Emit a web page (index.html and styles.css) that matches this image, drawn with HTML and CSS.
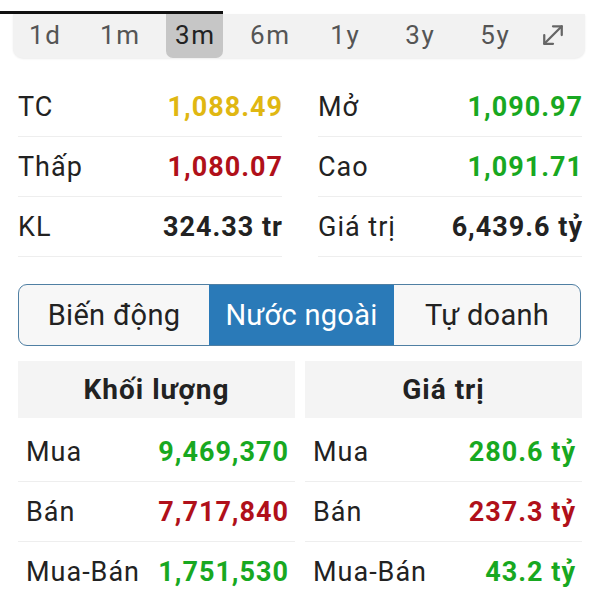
FILE: index.html
```html
<!DOCTYPE html>
<html lang="vi">

<head>
  <meta charset="UTF-8" />
  <meta name="viewport" content="width=device-width, initial-scale=1" />
  <title>Chỉ số thị trường</title>
  <link rel="stylesheet" href="styles.css">
</head>

<body>
  <div class="topline"></div>

  <nav class="periods">
    <span class="period">1d</span>
    <span class="period">1m</span>
    <span class="period active">3m</span>
    <span class="period">6m</span>
    <span class="period">1y</span>
    <span class="period">3y</span>
    <span class="period">5y</span>
    <span class="period expand">
      <svg width="30" height="30" viewBox="0 0 24 24" fill="none" stroke="#666" stroke-width="1.8" stroke-linecap="round" stroke-linejoin="round">
        <line x1="5" y1="19" x2="19" y2="5" />
        <polyline points="12,5 19,5 19,12" />
        <polyline points="5,12 5,19 12,19" />
      </svg>
    </span>
  </nav>

  <section class="stats">
    <div class="stat"><span>TC</span><b class="ref">1,088.49</b></div>
    <div class="stat"><span>Mở</span><b class="up">1,090.97</b></div>
    <div class="stat"><span>Thấp</span><b class="down">1,080.07</b></div>
    <div class="stat"><span>Cao</span><b class="up">1,091.71</b></div>
    <div class="stat"><span>KL</span><b>324.33 tr</b></div>
    <div class="stat"><span>Giá trị</span><b>6,439.6 tỷ</b></div>
  </section>

  <div class="tabs">
    <span class="tab">Biến động</span>
    <span class="tab active">Nước ngoài</span>
    <span class="tab">Tự doanh</span>
  </div>

  <section class="tables">
    <div class="table">
      <div class="head">Khối lượng</div>
      <div class="row"><span>Mua</span><b class="up">9,469,370</b></div>
      <div class="row"><span>Bán</span><b class="down">7,717,840</b></div>
      <div class="row"><span>Mua-Bán</span><b class="up">1,751,530</b></div>
    </div>
    <div class="table">
      <div class="head">Giá trị</div>
      <div class="row"><span>Mua</span><b class="up">280.6 tỷ</b></div>
      <div class="row"><span>Bán</span><b class="down">237.3 tỷ</b></div>
      <div class="row"><span>Mua-Bán</span><b class="up">43.2 tỷ</b></div>
    </div>
  </section>
</body>

</html>
```

FILE: styles.css
```css
body {
  font-family: Roboto, 'Noto Sans', sans-serif;
  margin: 0;
  background: white;
  color: #222;
}

.topline {
  width: 223px;
  height: 3px;
  margin-top: 11px;
  background: #111;
}

.periods {
  display: flex;
  gap: 18px;
  margin: 0 15px 0 13px;
  padding-left: 3px;
  height: 44px;
  background: #f2f2f2;
  border-radius: 0 0 10px 10px;
  box-shadow: 0 1px 2px rgba(0, 0, 0, 0.08);
}

.period {
  width: 57px;
  display: flex;
  align-items: center;
  justify-content: center;
  padding-bottom: 2px;
  font-size: 26px;
  letter-spacing: 1.5px;
  text-indent: 1.5px;
  color: #555;
  border-radius: 0 0 7px 7px;
}

.period.active {
  background: #c6c6c6;
  color: #222;
}

.period.expand {
  width: 40px;
  margin-left: -8px;
}

.stats {
  display: grid;
  grid-template-columns: 1fr 1fr;
  column-gap: 36px;
  margin: 19px 18px 0 18px;
}

.stat {
  display: flex;
  justify-content: space-between;
  align-items: center;
  height: 59px;
  border-bottom: 1px solid #eee;
  font-size: 27px;
  letter-spacing: 1px;
}

.stat b,
.row b {
  font-weight: bold;
  margin-right: -1px;
}

.ref {
  color: #e0b712;
}

.up {
  color: #18a821;
}

.down {
  color: #b0101a;
}

.tabs {
  display: grid;
  grid-template-columns: 190px 185px 1fr;
  margin: 27px 19px 0 18px;
  height: 60px;
  border: 1px solid #4f7fa3;
  border-radius: 9px;
  overflow: hidden;
  background: #f7f7f7;
}

.tab {
  display: flex;
  align-items: center;
  justify-content: center;
  font-size: 29px;
  letter-spacing: 0.3px;
  color: #222;
}

.tab.active {
  background: #2a7ab8;
  color: white;
}

.tables {
  display: grid;
  grid-template-columns: 1fr 1fr;
  column-gap: 10px;
  margin: 15px 18px 0 18px;
}

.head {
  height: 57px;
  display: flex;
  align-items: center;
  justify-content: center;
  background: #f4f4f4;
  font-size: 28px;
  letter-spacing: 1px;
  font-weight: bold;
  margin-bottom: 4px;
}

.row {
  display: flex;
  justify-content: space-between;
  align-items: center;
  height: 59px;
  padding: 0 7px 0 8px;
  border-bottom: 1px solid #eee;
  font-size: 27px;
  letter-spacing: 1px;
}
```
